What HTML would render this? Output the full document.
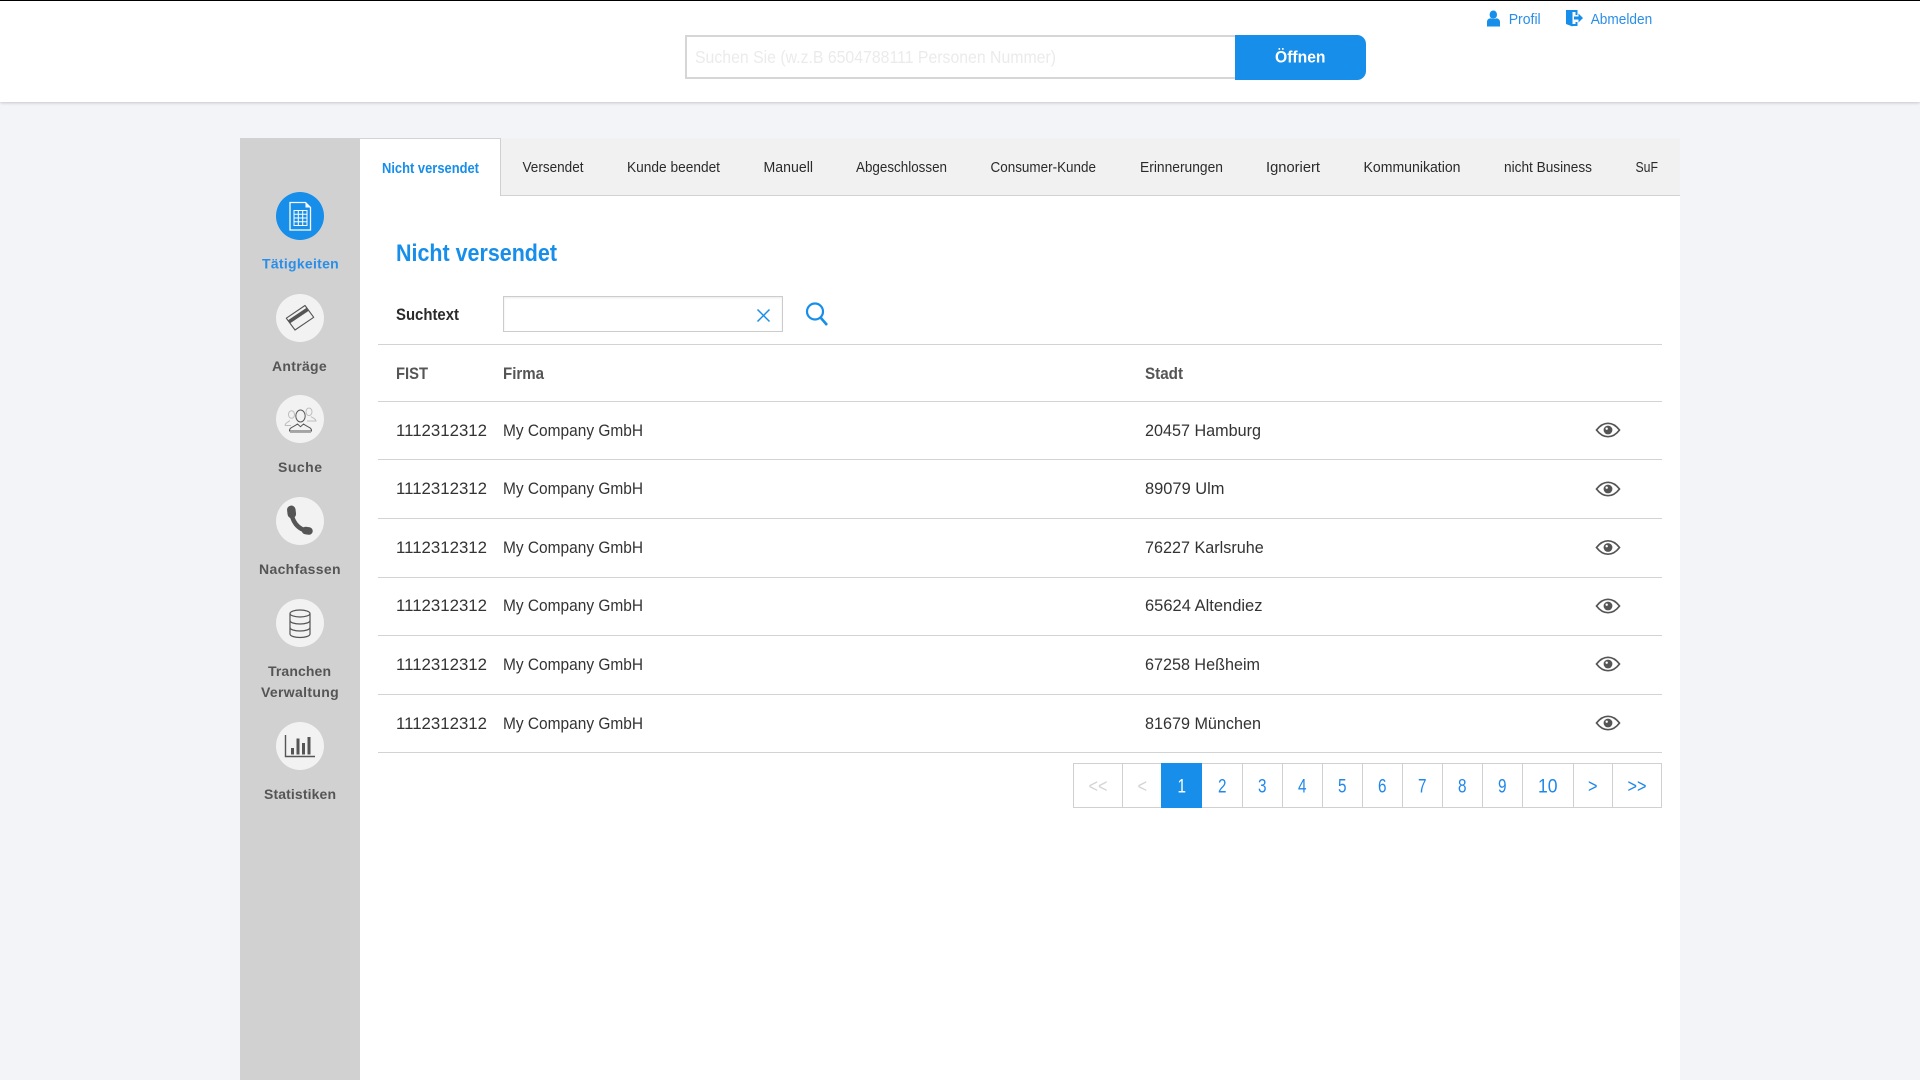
<!DOCTYPE html>
<html lang="de">
<head>
<meta charset="utf-8">
<title>Nicht versendet</title>
<style>
html,body{margin:0;padding:0;width:1920px;height:1080px;overflow:hidden;background:#f3f4f8;font-family:"Liberation Sans",sans-serif}
.b{position:absolute;box-sizing:border-box}
svg{position:absolute;left:0;top:0}
text{font-family:"Liberation Sans",sans-serif}
.tab{font-size:14.5px;fill:#2b2b2b}
.td{font-size:16.5px;fill:#333}
.th{font-size:16.5px;font-weight:bold;fill:#555}
.side{font-size:14px;font-weight:bold;fill:#555}
.pg{font-size:19px;fill:#1f87ea}
.pd{font-size:19px;fill:#d4d4d4}
</style>
</head>
<body>
<div class="b" style="left:0;top:0;width:1920px;height:102px;background:#fff;border-top:1px solid #000;box-shadow:0 1px 3px rgba(0,0,0,.18)"></div>
<div class="b" style="left:685px;top:35px;width:551px;height:44px;background:#fff;border:2px solid #d6d6d6;border-right:0"></div>
<div class="b" style="left:1235px;top:35px;width:131px;height:45px;background:#168eea;border-radius:0 9px 9px 0"></div>

<div class="b" style="left:240px;top:138px;width:120px;height:942px;background:#d1d1d1"></div>
<div class="b" style="left:360px;top:138px;width:1320px;height:942px;background:#fff"></div>
<div class="b" style="left:500px;top:138px;width:1180px;height:58px;background:#f1f1f1;border-bottom:1px solid #d3d3d3"></div>
<div class="b" style="left:360px;top:138px;width:141px;height:58px;background:#fff;border-top:1px solid #d3d3d3;border-right:1px solid #d0d0d0"></div>

<div class="b" style="left:503px;top:296px;width:280px;height:36px;background:#fff;border:1px solid #ccc;box-shadow:inset 0 1px 2px rgba(0,0,0,.08)"></div>

<div class="b" style="left:378px;top:344px;width:1284px;height:1px;background:#d3d3d3"></div>
<div class="b" style="left:378px;top:401px;width:1284px;height:1px;background:#d3d3d3"></div>
<div class="b" style="left:378px;top:459px;width:1284px;height:1px;background:#d3d3d3"></div>
<div class="b" style="left:378px;top:518px;width:1284px;height:1px;background:#d3d3d3"></div>
<div class="b" style="left:378px;top:577px;width:1284px;height:1px;background:#d3d3d3"></div>
<div class="b" style="left:378px;top:635px;width:1284px;height:1px;background:#d3d3d3"></div>
<div class="b" style="left:378px;top:694px;width:1284px;height:1px;background:#d3d3d3"></div>
<div class="b" style="left:378px;top:752px;width:1284px;height:1px;background:#d3d3d3"></div>

<div class="b" style="left:1073px;top:763px;width:589px;height:45px;background:#fff;border:1px solid #d0d0d0"></div>
<div class="b" style="left:1122px;top:763px;width:1px;height:45px;background:#d0d0d0"></div>
<div class="b" style="left:1161px;top:763px;width:41px;height:45px;background:#168eea"></div>
<div class="b" style="left:1242px;top:763px;width:1px;height:45px;background:#d0d0d0"></div>
<div class="b" style="left:1282px;top:763px;width:1px;height:45px;background:#d0d0d0"></div>
<div class="b" style="left:1322px;top:763px;width:1px;height:45px;background:#d0d0d0"></div>
<div class="b" style="left:1362px;top:763px;width:1px;height:45px;background:#d0d0d0"></div>
<div class="b" style="left:1402px;top:763px;width:1px;height:45px;background:#d0d0d0"></div>
<div class="b" style="left:1442px;top:763px;width:1px;height:45px;background:#d0d0d0"></div>
<div class="b" style="left:1482px;top:763px;width:1px;height:45px;background:#d0d0d0"></div>
<div class="b" style="left:1522px;top:763px;width:1px;height:45px;background:#d0d0d0"></div>
<div class="b" style="left:1573px;top:763px;width:1px;height:45px;background:#d0d0d0"></div>
<div class="b" style="left:1612px;top:763px;width:1px;height:45px;background:#d0d0d0"></div>

<svg width="1920" height="1080" viewBox="0 0 1920 1080" xmlns="http://www.w3.org/2000/svg">
<defs>
<g id="eye">
<path d="M-11.5 0C-8 -4.6 -4 -6.7 0 -6.7S8 -4.6 11.5 0C8 4.6 4 6.7 0 6.7S-8 4.6 -11.5 0Z" fill="none" stroke="#555" stroke-width="1.7"/>
<circle r="4.4" fill="#555"/><circle cx="-1.3" cy="-1.3" r="1.2" fill="#fff"/>
</g>
</defs>

<!-- header -->
<path d="M1493.3 10.5a3.7 4 0 0 1 3.7 4.2a3.7 4.2 0 0 1-7.4 0a3.7 4 0 0 1 3.7-4.2zM1487 26.5v-4.5c0-2.8 2.2-3.6 3.8-3.8c1.6 1 3.8 1 5.4 0c1.6.2 3.8 1 3.8 3.8v4.5z" fill="#168eea"/>
<text x="1508.7" y="24" font-size="14.5" fill="#2a8ee8" textLength="32" lengthAdjust="spacingAndGlyphs">Profil</text>
<path d="M1566 10h11.500v5h-2v-3h-3v14.500l-6.500-2.500zM1575.500 22h2v4h-5v-2h3zM1574 16.500h4.500v-3l4.500 4.500l-4.500 4.500v-3h-4.500z" fill="#168eea"/>
<text x="1590.7" y="24" font-size="14.5" fill="#2a8ee8" textLength="61.500" lengthAdjust="spacingAndGlyphs">Abmelden</text>
<text x="695" y="63" font-size="17.500" fill="#ebebeb" textLength="361" lengthAdjust="spacingAndGlyphs">Suchen Sie (w.z.B 6504788111 Personen Nummer)</text>
<text x="1275" y="62.700" font-size="16.500" font-weight="bold" fill="#fff" textLength="50.500" lengthAdjust="spacingAndGlyphs">Öffnen</text>

<!-- tabs -->
<text x="382" y="173" font-size="14.500" font-weight="bold" fill="#168eea" textLength="97" lengthAdjust="spacingAndGlyphs">Nicht versendet</text>
<text class="tab" x="522.500" y="172" textLength="61" lengthAdjust="spacingAndGlyphs">Versendet</text>
<text class="tab" x="627" y="172" textLength="93" lengthAdjust="spacingAndGlyphs">Kunde beendet</text>
<text class="tab" x="763.500" y="172" textLength="49.500" lengthAdjust="spacingAndGlyphs">Manuell</text>
<text class="tab" x="856" y="172" textLength="91" lengthAdjust="spacingAndGlyphs">Abgeschlossen</text>
<text class="tab" x="990.500" y="172" textLength="105.500" lengthAdjust="spacingAndGlyphs">Consumer-Kunde</text>
<text class="tab" x="1140" y="172" textLength="83" lengthAdjust="spacingAndGlyphs">Erinnerungen</text>
<text class="tab" x="1266" y="172" textLength="54" lengthAdjust="spacingAndGlyphs">Ignoriert</text>
<text class="tab" x="1363.500" y="172" textLength="97" lengthAdjust="spacingAndGlyphs">Kommunikation</text>
<text class="tab" x="1504" y="172" textLength="88" lengthAdjust="spacingAndGlyphs">nicht Business</text>
<text class="tab" x="1635.500" y="172" textLength="22.500" lengthAdjust="spacingAndGlyphs">SuF</text>

<!-- heading -->
<text x="396" y="261" font-size="24" font-weight="bold" fill="#168eea" textLength="161" lengthAdjust="spacingAndGlyphs">Nicht versendet</text>
<text x="396" y="320" font-size="16.500" font-weight="bold" fill="#2b2b2b" textLength="63" lengthAdjust="spacingAndGlyphs">Suchtext</text>
<path d="M757.500 309.500L769.500 321.500M769.500 309.500L757.500 321.500" stroke="#168eea" stroke-width="1.500" fill="none"/>
<circle cx="815" cy="311.500" r="8" fill="none" stroke="#168eea" stroke-width="2.200"/>
<path d="M820.500 317.500L827 325" stroke="#168eea" stroke-width="2.600" fill="none"/>

<!-- table -->
<text class="th" x="396" y="379" textLength="32" lengthAdjust="spacingAndGlyphs">FIST</text>
<text class="th" x="503" y="379" textLength="41" lengthAdjust="spacingAndGlyphs">Firma</text>
<text class="th" x="1145" y="379" textLength="38" lengthAdjust="spacingAndGlyphs">Stadt</text>

<text class="td" x="396" y="436" textLength="91" lengthAdjust="spacingAndGlyphs">1112312312</text>
<text class="td" x="503" y="436" textLength="140" lengthAdjust="spacingAndGlyphs">My Company GmbH</text>
<text class="td" x="1145" y="436" textLength="116" lengthAdjust="spacingAndGlyphs">20457 Hamburg</text>
<use href="#eye" x="1608" y="430"/>

<text class="td" x="396" y="494" textLength="91" lengthAdjust="spacingAndGlyphs">1112312312</text>
<text class="td" x="503" y="494" textLength="140" lengthAdjust="spacingAndGlyphs">My Company GmbH</text>
<text class="td" x="1145" y="494" textLength="79.500" lengthAdjust="spacingAndGlyphs">89079 Ulm</text>
<use href="#eye" x="1608" y="489"/>

<text class="td" x="396" y="553" textLength="91" lengthAdjust="spacingAndGlyphs">1112312312</text>
<text class="td" x="503" y="553" textLength="140" lengthAdjust="spacingAndGlyphs">My Company GmbH</text>
<text class="td" x="1145" y="553" textLength="118.700" lengthAdjust="spacingAndGlyphs">76227 Karlsruhe</text>
<use href="#eye" x="1608" y="547.500"/>

<text class="td" x="396" y="611" textLength="91" lengthAdjust="spacingAndGlyphs">1112312312</text>
<text class="td" x="503" y="611" textLength="140" lengthAdjust="spacingAndGlyphs">My Company GmbH</text>
<text class="td" x="1145" y="611" textLength="117.500" lengthAdjust="spacingAndGlyphs">65624 Altendiez</text>
<use href="#eye" x="1608" y="606"/>

<text class="td" x="396" y="670" textLength="91" lengthAdjust="spacingAndGlyphs">1112312312</text>
<text class="td" x="503" y="670" textLength="140" lengthAdjust="spacingAndGlyphs">My Company GmbH</text>
<text class="td" x="1145" y="670" textLength="115" lengthAdjust="spacingAndGlyphs">67258 Heßheim</text>
<use href="#eye" x="1608" y="664"/>

<text class="td" x="396" y="729" textLength="91" lengthAdjust="spacingAndGlyphs">1112312312</text>
<text class="td" x="503" y="729" textLength="140" lengthAdjust="spacingAndGlyphs">My Company GmbH</text>
<text class="td" x="1145" y="729" textLength="116" lengthAdjust="spacingAndGlyphs">81679 München</text>
<use href="#eye" x="1608" y="723"/>

<!-- pagination -->
<text class="pd" x="1088.500" y="792.500" textLength="19" lengthAdjust="spacingAndGlyphs">&lt;&lt;</text>
<text class="pd" x="1137.500" y="792.500" textLength="9.500" lengthAdjust="spacingAndGlyphs">&lt;</text>
<text class="pg" style="fill:#fff" x="1177.500" y="792.500" textLength="8.500" lengthAdjust="spacingAndGlyphs">1</text>
<text class="pg" x="1218" y="792.500" textLength="8.500" lengthAdjust="spacingAndGlyphs">2</text>
<text class="pg" x="1258" y="792.500" textLength="8.500" lengthAdjust="spacingAndGlyphs">3</text>
<text class="pg" x="1298" y="792.500" textLength="8.500" lengthAdjust="spacingAndGlyphs">4</text>
<text class="pg" x="1338" y="792.500" textLength="8.500" lengthAdjust="spacingAndGlyphs">5</text>
<text class="pg" x="1378" y="792.500" textLength="8.500" lengthAdjust="spacingAndGlyphs">6</text>
<text class="pg" x="1418" y="792.500" textLength="8.500" lengthAdjust="spacingAndGlyphs">7</text>
<text class="pg" x="1458" y="792.500" textLength="8.500" lengthAdjust="spacingAndGlyphs">8</text>
<text class="pg" x="1498" y="792.500" textLength="8.500" lengthAdjust="spacingAndGlyphs">9</text>
<text class="pg" x="1538" y="792.500" textLength="19.500" lengthAdjust="spacingAndGlyphs">10</text>
<text class="pg" x="1588" y="792.500" textLength="9.500" lengthAdjust="spacingAndGlyphs">&gt;</text>
<text class="pg" x="1627.500" y="792.500" textLength="19" lengthAdjust="spacingAndGlyphs">&gt;&gt;</text>

<!-- sidebar -->
<circle cx="300" cy="216" r="24" fill="#168eea"/>
<path d="M290 202.500h15.500l5 5v22.500h-20.500z" fill="none" stroke="#fff" stroke-width="1.300"/>
<path d="M305.500 202.500v5h5z" fill="#fff"/>
<path d="M294 210.500h13v15h-13zM294 214.200h13M294 218h13M294 221.800h13M298.300 210.500v15M302.700 210.500v15" fill="none" stroke="#fff" stroke-width="1"/>
<text class="side" style="fill:#2a8ee8" x="262" y="268.700" textLength="76.700" lengthAdjust="spacing">Tätigkeiten</text>

<circle cx="300" cy="318" r="24" fill="#f2f2f2"/>
<path d="M305 305.500L313.700 317.300L295 330L286.300 318.200Z" fill="none" stroke="#555" stroke-width="1.100" stroke-linejoin="round"/>
<path d="M306.800 307.600L309 310.600L290 323.400L287.800 320.400Z" fill="#555"/>
<text class="side" x="272" y="371" textLength="54.700" lengthAdjust="spacing">Anträge</text>

<circle cx="300" cy="419" r="24" fill="#f2f2f2"/>
<g fill="none" stroke="#bdbdbd" stroke-width="1">
<ellipse cx="291.500" cy="414.500" rx="3" ry="3.800"/>
<path d="M285 425.500c.3-3 3.500-3.500 5-5M285 425.500h6"/>
<ellipse cx="309" cy="411.800" rx="3" ry="3.800"/>
<path d="M311 416.500c1 1.500 4.500 1.500 5 4.500h-9"/>
</g>
<ellipse cx="300.500" cy="416" rx="4.700" ry="6" fill="#f2f2f2" stroke="#555" stroke-width="1"/>
<path d="M289.500 431c-.5-3.500 5-4.500 8-7l3 2.700l3-2.700c3 2.500 8.500 3.500 8 7z" fill="#f2f2f2" stroke="#555" stroke-width="1"/>
<path d="M290 432.500h21" fill="none" stroke="#aaa" stroke-width="1"/>
<text class="side" x="278" y="472" textLength="44" lengthAdjust="spacing">Suche</text>

<circle cx="300" cy="521" r="24" fill="#f2f2f2"/>
<path d="M291.500 511C291.500 520 297 530 309 531" fill="none" stroke="#555" stroke-width="4.500"/>
<path d="M291.300 509.800L291.800 514" fill="none" stroke="#555" stroke-width="8.500" stroke-linecap="round"/>
<path d="M305.500 530.500L309 531" fill="none" stroke="#555" stroke-width="7.500" stroke-linecap="round"/>
<text class="side" x="259" y="574" textLength="81.600" lengthAdjust="spacing">Nachfassen</text>

<circle cx="300" cy="623" r="24" fill="#f2f2f2"/>
<g fill="none" stroke="#555" stroke-width="1.200">
<ellipse cx="300" cy="613.500" rx="10" ry="3.500"/>
<path d="M290 613.500v20.500c0 2 4.500 3.500 10 3.500s10-1.500 10-3.500v-20.500"/>
<path d="M290 620.500c0 2 4.500 3.500 10 3.500s10-1.500 10-3.500M290 627.500c0 2 4.500 3.500 10 3.500s10-1.500 10-3.500"/>
</g>
<text class="side" x="268" y="676" textLength="63" lengthAdjust="spacing">Tranchen</text>
<text class="side" x="261" y="697" textLength="77.700" lengthAdjust="spacing">Verwaltung</text>

<circle cx="300" cy="746" r="24" fill="#f2f2f2"/>
<path d="M285.500 735v21.500h29.500" fill="none" stroke="#555" stroke-width="1.400"/>
<path d="M291 748h3v6.500h-3zM296.500 738.500h3v16h-3zM302 743h3v11.500h-3zM307.500 737h3v17.500h-3z" fill="#555"/>
<text class="side" x="264" y="799" textLength="72" lengthAdjust="spacing">Statistiken</text>
</svg>
</body>
</html>
